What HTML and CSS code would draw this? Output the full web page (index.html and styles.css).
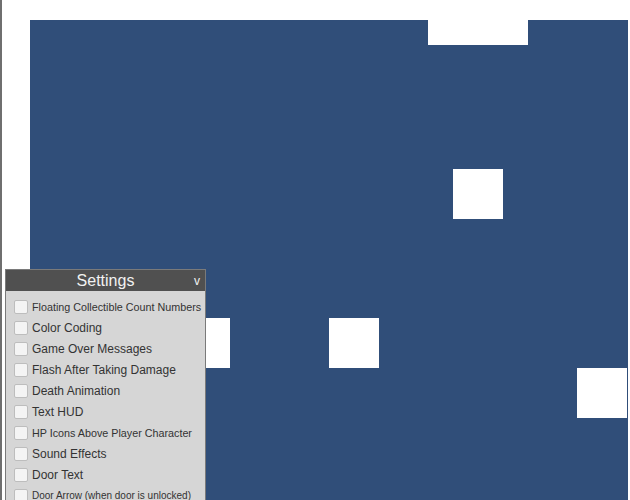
FILE: index.html
```html
<!DOCTYPE html>
<html>
<head>
<meta charset="utf-8">
<link rel="stylesheet" href="styles.css">
</head>
<body>
<div class="page">
  <div class="canvas">
    <div class="block" style="left:398px;top:0;width:100px;height:25px"></div>
    <div class="block" style="left:423px;top:149px;width:50px;height:50px"></div>
    <div class="block" style="left:150px;top:298px;width:50px;height:50px"></div>
    <div class="block" style="left:299px;top:298px;width:50px;height:50px"></div>
    <div class="block" style="left:547px;top:348px;width:50px;height:50px"></div>
  </div>
  <div class="settings">
    <div class="settings-head">
      <span class="settings-title">Settings</span>
      <span class="settings-toggle">v</span>
    </div>
    <div class="settings-list">
      <label class="opt"><span class="box"></span><span class="lbl sm">Floating Collectible Count Numbers</span></label>
      <label class="opt"><span class="box"></span><span class="lbl">Color Coding</span></label>
      <label class="opt"><span class="box"></span><span class="lbl">Game Over Messages</span></label>
      <label class="opt"><span class="box"></span><span class="lbl">Flash After Taking Damage</span></label>
      <label class="opt"><span class="box"></span><span class="lbl">Death Animation</span></label>
      <label class="opt"><span class="box"></span><span class="lbl">Text HUD</span></label>
      <label class="opt"><span class="box"></span><span class="lbl sm">HP Icons Above Player Character</span></label>
      <label class="opt"><span class="box"></span><span class="lbl">Sound Effects</span></label>
      <label class="opt"><span class="box"></span><span class="lbl">Door Text</span></label>
      <label class="opt"><span class="box"></span><span class="lbl xs">Door Arrow (when door is unlocked)</span></label>
    </div>
  </div>
</div>
</body>
</html>
```
FILE: styles.css
```css
html, body {
  margin: 0;
  padding: 0;
  overflow: hidden;
  background: #ffffff;
  font-family: "Liberation Sans", Arial, sans-serif;
}
.page {
  position: relative;
  height: 500px;
  width: 628px;
  border-left: 2px solid #6f6f6f;
  padding: 20px 0 0 28px;
  box-sizing: border-box;
  overflow: hidden;
}
.canvas {
  position: relative;
  width: 620px;
  height: 500px;
  background: #304e79;
}
.block {
  position: absolute;
  background: #ffffff;
}
.settings {
  position: absolute;
  left: 3px;
  top: 269px;
  width: 201px;
  height: 260px;
  box-sizing: border-box;
  border: 1px solid #7a7a7a;
  background: #d6d6d6;
}
.settings-head {
  position: relative;
  height: 21px;
  background: #505050;
  display: flex;
  align-items: center;
  justify-content: center;
}
.settings-title {
  color: #f2f2f2;
  font-size: 16px;
  line-height: 21px;
}
.settings-toggle {
  position: absolute;
  right: 5px;
  top: 1px;
  color: #f2f2f2;
  font-size: 12px;
  line-height: 21px;
}
.settings-list {
  padding: 5px 0 0 8px;
  display: flex;
  flex-direction: column;
}
.opt {
  height: 21px;
  display: flex;
  align-items: center;
  gap: 4px;
}
.box {
  width: 12px;
  height: 12px;
  border: 1px solid #bdbdbd;
  border-radius: 2px;
  background: #f4f4f4;
  flex: none;
}
.lbl {
  color: #333333;
  font-size: 12px;
  white-space: nowrap;
}
.lbl.sm { font-size: 10.75px; }
.lbl.xs { font-size: 10px; }
```
